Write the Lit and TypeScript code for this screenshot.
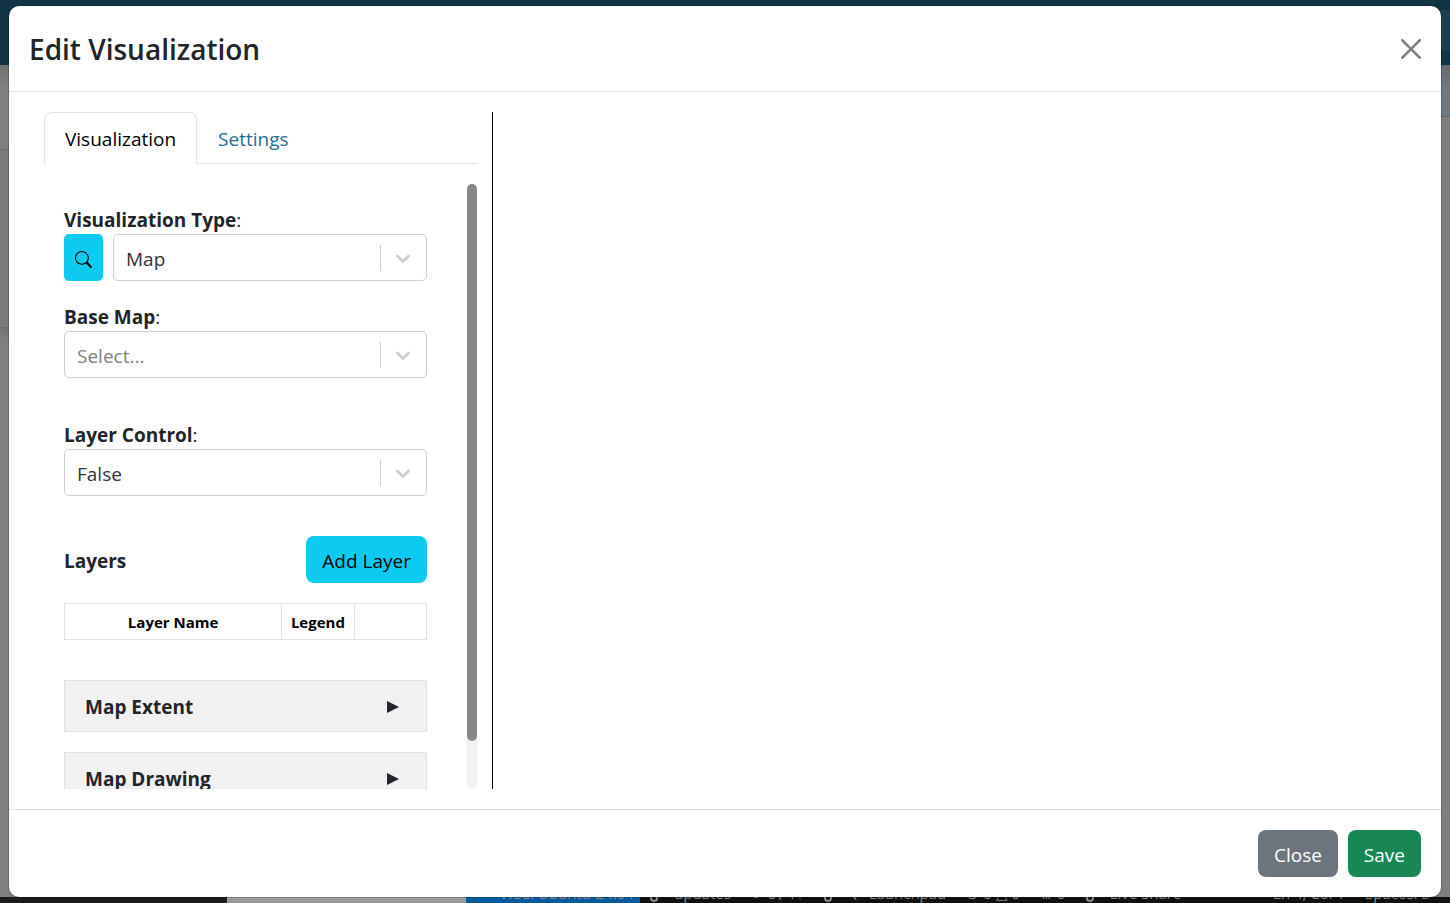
import { LitElement, html, css } from "lit";
import { customElement, property, state } from "lit/decorators.js";

const FONT = css`"Open Sans", "Noto Sans", sans-serif`;

@customElement("select-field")
class SelectField extends LitElement {
  @property() label = "";
  @property() value = "";
  @property({ type: Array }) options: string[] = [];
  @property() placeholder = "";
  @property({ type: Boolean }) searchable = false;

  static styles = css`
    :host { display: block; }
    * { box-sizing: border-box; }
    .label { display: block; padding-top: 2px; font-weight: 400; line-height: 28px; }
    .label b { font-weight: 700; }
    .row { display: flex; gap: 10px; }
    .search {
      display: grid; place-items: center; flex: none;
      width: 39px; height: 47px; padding: 4px 0 0; border: 0; border-radius: 5px;
      background: #0dcaf0; color: #000; cursor: pointer;
    }
    .search svg { width: 17px; height: 17px; }
    .box { position: relative; flex: 1; min-width: 0; }
    select {
      appearance: none; display: block; width: 100%; height: 47px;
      padding: 2px 60px 0 12px; border: 1px solid #ccc; border-radius: 5px;
      background: #fff; color: #333; font: inherit;
    }
    select.empty { color: #808080; }
    .indicator {
      position: absolute; top: 0; right: 0; bottom: 0;
      display: flex; align-items: center; pointer-events: none;
    }
    .divider { width: 1px; height: 26px; background: #ccc; }
    .indicator svg { width: 24px; height: 24px; margin: 0 12px 0 10px; fill: #ccc; }
  `;

  render() {
    return html`
      <label class="label" for="control"><b>${this.label}</b>:</label>
      <div class="row">
        ${this.searchable
          ? html`<button class="search" type="button" aria-label="Search">
              <svg viewBox="0 0 16 16" fill="currentColor">
                <path d="M11.742 10.344a6.5 6.5 0 1 0-1.397 1.398h-.001q.044.06.098.115l3.85 3.85a1 1 0 0 0 1.415-1.414l-3.85-3.85a1 1 0 0 0-.115-.1zM12 6.5a5.5 5.5 0 1 1-11 0 5.5 5.5 0 0 1 11 0"/>
              </svg>
            </button>`
          : ""}
        <div class="box">
          <select id="control" class=${this.value ? "" : "empty"}>
            ${this.placeholder ? html`<option value="">${this.placeholder}</option>` : ""}
            ${this.options.map((o) => html`<option ?selected=${o === this.value}>${o}</option>`)}
          </select>
          <span class="indicator">
            <span class="divider"></span>
            <svg viewBox="0 0 20 20">
              <path d="M4.516 7.548c0.436-0.446 1.043-0.481 1.576 0l3.908 3.747 3.908-3.747c0.533-0.481 1.141-0.446 1.574 0 0.436 0.445 0.408 1.197 0 1.615-0.406 0.418-4.695 4.502-4.695 4.502-0.217 0.223-0.502 0.335-0.787 0.335s-0.57-0.112-0.789-0.335c0 0-4.287-4.084-4.695-4.502s-0.436-1.17 0-1.615z"/>
            </svg>
          </span>
        </div>
      </div>
    `;
  }
}

@customElement("page-behind")
class PageBehind extends LitElement {
  static styles = css`
    :host {
      display: flex; flex-direction: column; height: 100%; background: #7f7f7f;
      font: 15px/20px ${FONT};
    }
    .bar { display: flex; justify-content: flex-end; height: 65px; background: #0f3445; }
    .account { width: 60px; margin: 10px 0 15px; background: #1a3f50; }
    .content { display: flex; flex: 1; min-height: 0; justify-content: space-between; }
    .left { width: 60px; }
    .left div { box-sizing: border-box; border-bottom: 1px solid #6d6d6d; }
    .head { height: 85px; background: linear-gradient(#727272, #7f7f7f 24px); }
    .list { height: 178px; background: #7b7b7b; box-shadow: 0 4px 10px rgba(0, 0, 0, 0.15); }
    .right { width: 60px; }
    .tool {
      box-sizing: border-box; height: 52px; border-bottom: 1px solid #666;
      background: linear-gradient(#63696f, #707880 24px);
    }
    .status {
      display: flex; flex: none; align-items: flex-end; height: 6px; overflow: hidden;
      background: #101010; color: #8c8c8c; white-space: nowrap;
    }
    .dark { align-self: stretch; width: 227px; background: #1c1c1c; }
    .pale { align-self: stretch; width: 239px; background: #999; }
    .blue { box-sizing: border-box; width: 174px; padding-left: 34px; background: #005a9e; }
    .items { display: flex; flex: 1; gap: 20px; padding: 0 20px 0 10px; }
    .branch { display: flex; gap: 16px; align-items: flex-end; }
    .branch svg { width: 8px; height: 12px; fill: none; stroke: #8c8c8c; stroke-width: 2; }
    .end { margin-left: auto; }
  `;

  render() {
    const dot = html`<svg viewBox="0 0 8 12"><circle cx="4" cy="7" r="3"/></svg>`;
    return html`
      <div class="bar"><div class="account"></div></div>
      <div class="content">
        <div class="left"><div class="head"></div><div class="list"></div></div>
        <div class="right"><div class="tool"></div></div>
      </div>
      <div class="status">
        <div class="dark"></div>
        <div class="pale"></div>
        <div class="blue">WSL: Ubuntu-24.04</div>
        <div class="items">
          <span class="branch">${dot}updates</span><span>⟳ 0↓ 1↑</span><span class="branch">${dot}</span>
          <span>⇄ Launchpad</span><span>⊗ 0 △ 0</span><span>⋔ 0</span>
          <span class="branch">${dot}Live Share</span>
          <span class="end">Ln 4, Col 1</span><span>Spaces: 3</span>
        </div>
      </div>
    `;
  }
}

@customElement("app-root")
class AppRoot extends LitElement {
  @state() private tab = "Visualization";

  static styles = css`
    :host {
      display: block; position: relative; height: 100vh; overflow: hidden;
      color: #212529; font: 19px/30px ${FONT};
    }
    * { box-sizing: border-box; }
    button { font: inherit; cursor: pointer; }
    .dialog {
      position: absolute; inset: 6px 9px;
      display: flex; flex-direction: column;
      border-radius: 10px; background: #fff;
      box-shadow: 0 0 0 1px rgba(0, 0, 0, 0.18);
    }
    .header {
      display: flex; align-items: center; justify-content: space-between;
      height: 86px; padding: 0 20px; border-bottom: 1px solid #dee2e6;
    }
    h1 { margin: 0; font-size: 28px; line-height: 42px; font-weight: 600; }
    .close { display: grid; padding: 0; border: 0; background: none; }
    .close svg { width: 20px; height: 20px; fill: #7f7f7f; }
    .body { display: flex; flex: 1; min-height: 0; padding: 20px; }
    .side {
      display: flex; flex-direction: column; gap: 20px;
      width: 33.3333%; padding: 0 15px; border-right: 1px solid #000;
    }
    .preview { flex: 1; }
    .tabs { display: flex; flex: none; height: 52px; border-bottom: 1px solid #dee2e6; }
    .tab {
      height: 52px; padding: 2px 20px 0; border: 1px solid transparent;
      border-radius: 8px 8px 0 0; background: none; color: #1f6f92;
    }
    .tab.active { border-color: #dee2e6 #dee2e6 #fff; background: #fff; color: #000; }
    .scroll { display: flex; flex: 1; min-height: 0; }
    .form { flex: 1; min-width: 0; overflow: hidden; padding: 20px 40px 0 20px; }
    .track { flex: none; width: 10px; border-radius: 5px; background: #f1f1f1; }
    .thumb { height: 92%; border-radius: 5px; background: #888; }
    .base { margin-top: 20px; }
    .control { margin-top: 41px; }
    .layers {
      display: flex; align-items: center; justify-content: space-between;
      margin: 40px 0 20px;
    }
    h2 { margin: 0; padding-top: 2px; font-size: inherit; font-weight: 700; }
    .btn { height: 47px; padding: 2px 16px 0; border: 0; border-radius: 8px; color: #fff; }
    .info { background: #0dcaf0; color: #000; }
    .grey { background: #6c757d; }
    .green { background: #198754; }
    table {
      width: 100%; margin-bottom: 40px; border-collapse: collapse;
      color: #000; font-size: 15px; line-height: 23px;
    }
    th { padding: 7px 7px 5px; border: 1px solid #dee2e6; font-weight: 700; text-align: center; }
    .legend, .actions { width: 20%; }
    .panel {
      display: flex; align-items: center; justify-content: space-between;
      width: 100%; height: 52px; margin-bottom: 20px; padding: 2px 27px 0 20px;
      border: 1px solid #dee2e6; border-radius: 0;
      background: #f1f1f1; color: inherit; font-weight: 700;
    }
    .panel svg { width: 12px; height: 12px; fill: #212529; }
    .footer {
      display: flex; align-items: center; justify-content: flex-end; gap: 10px;
      height: 88px; padding: 0 20px; border-top: 1px solid #dee2e6;
    }
  `;

  private panel(title: string) {
    return html`<button class="panel" type="button" aria-expanded="false">
      ${title}<svg viewBox="0 0 12 12"><path d="M0 0L12 6L0 12z"/></svg>
    </button>`;
  }

  render() {
    return html`
      <page-behind></page-behind>
      <div class="dialog" role="dialog" aria-labelledby="title">
        <header class="header">
          <h1 id="title">Edit Visualization</h1>
          <button class="close" type="button" aria-label="Close">
            <svg viewBox="0 0 16 16"><path d="M.293.293a1 1 0 0 1 1.414 0L8 6.586 14.293.293a1 1 0 1 1 1.414 1.414L9.414 8l6.293 6.293a1 1 0 0 1-1.414 1.414L8 9.414l-6.293 6.293a1 1 0 0 1-1.414-1.414L6.586 8 .293 1.707a1 1 0 0 1 0-1.414z"/></svg>
          </button>
        </header>
        <div class="body">
          <section class="side">
            <div class="tabs" role="tablist">
              ${["Visualization", "Settings"].map(
                (name) => html`<button
                  class="tab ${name === this.tab ? "active" : ""}"
                  type="button" role="tab" aria-selected=${name === this.tab}
                  @click=${() => (this.tab = name)}
                >${name}</button>`
              )}
            </div>
            <div class="scroll">
              <div class="form">
                <select-field label="Visualization Type" value="Map" .options=${["Map"]} searchable></select-field>
                <select-field class="base" label="Base Map" placeholder="Select..."></select-field>
                <select-field class="control" label="Layer Control" value="False" .options=${["True", "False"]}></select-field>
                <div class="layers">
                  <h2>Layers</h2>
                  <button class="btn info" type="button">Add Layer</button>
                </div>
                <table>
                  <thead>
                    <tr><th>Layer Name</th><th class="legend">Legend</th><th class="actions"></th></tr>
                  </thead>
                </table>
                ${this.panel("Map Extent")} ${this.panel("Map Drawing")}
              </div>
              <div class="track"><div class="thumb"></div></div>
            </div>
          </section>
          <section class="preview"></section>
        </div>
        <footer class="footer">
          <button class="btn grey" type="button">Close</button>
          <button class="btn green" type="button">Save</button>
        </footer>
      </div>
    `;
  }
}
